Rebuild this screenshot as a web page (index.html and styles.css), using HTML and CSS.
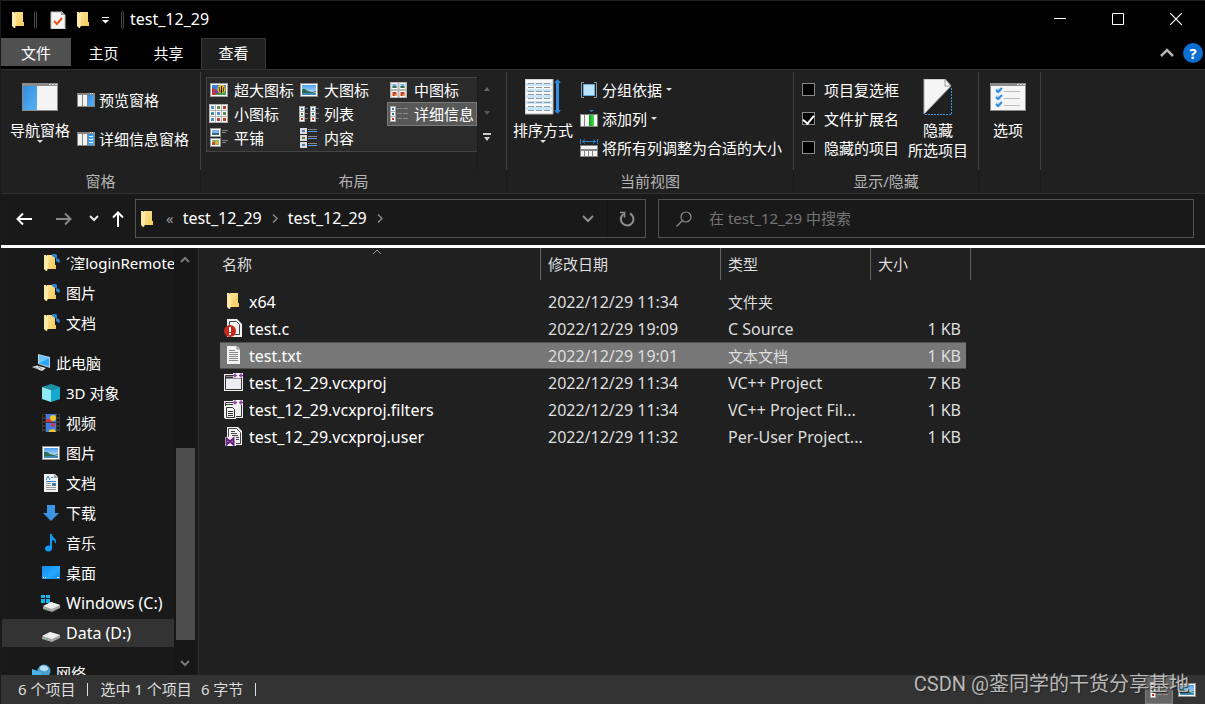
FILE: index.html
```
<!DOCTYPE html>
<html lang="zh-CN">
<head>
    <meta charset="UTF-8">
    <meta name="viewport" content="width=device-width, initial-scale=1.0">
    <title>test_12_29</title>
    <link rel="stylesheet" href="styles.css">
</head>
<body>
    <!-- Shared icons -->
    <svg class="defs" aria-hidden="true">
        <defs>
            <linearGradient id="gFolder" x1="0" y1="0" x2="1" y2="1">
                <stop offset="0" stop-color="#ffe493"/><stop offset="1" stop-color="#f4c959"/>
            </linearGradient>
            <linearGradient id="gBlue" x1="0" y1="0" x2="1" y2="1">
                <stop offset="0" stop-color="#2f8de0"/><stop offset="1" stop-color="#5cb0f2"/>
            </linearGradient>
            <linearGradient id="gSky" x1="0" y1="0" x2="0" y2="1">
                <stop offset="0" stop-color="#4a9ff0"/><stop offset="1" stop-color="#dff0fb"/>
            </linearGradient>
            <linearGradient id="gDesk" x1="0" y1="0" x2="1" y2="1">
                <stop offset="0" stop-color="#0f8cf0"/><stop offset="0.6" stop-color="#27a6ff"/><stop offset="1" stop-color="#0d8ef5"/>
            </linearGradient>
            <linearGradient id="gGreen" x1="0" y1="0" x2="1" y2="0">
                <stop offset="0" stop-color="#0fa01d"/><stop offset="1" stop-color="#3fe04a"/>
            </linearGradient>
        </defs>
        <symbol id="i-folder" viewBox="0 0 18 18">
            <path d="M5 1h8v10h1v4H5z" fill="url(#gFolder)"/>
            <path d="M2 1h2l2 2v11l-1 3H4l-2-2z" fill="#ffe9a6"/>
        </symbol>
        <symbol id="i-pinned" viewBox="0 0 18 18">
            <use href="#i-folder" width="18" height="18"/>
            <path d="M10 0l3-1 2 2v3l-2 0-3-2z" fill="#2b83cf"/>
            <path d="M14 4l3 1 1 2-1 2-3-2z" fill="#2b83cf"/>
        </symbol>
        <symbol id="i-check" viewBox="0 0 18 18">
            <path d="M2 1h11l3 3v14H2z" fill="#f4f4f4" stroke="#bdbdbd"/>
            <path d="M12 0v4h4z" fill="#9d9d9d"/>
            <path d="M5 10l3 3 5-6" fill="none" stroke="#e8541a" stroke-width="2"/>
        </symbol>
        <symbol id="i-picture" viewBox="0 0 18 14">
            <path d="M0 0h18v14H0z" fill="#8f8f8f"/>
            <path d="M1 1h16v12H1z" fill="#fff"/>
            <path d="M2 2h14v10H2z" fill="url(#gSky)"/>
            <path d="M2 6l3 0 3 2 4 1 4-1v1l-4 1H2z" fill="#2d6c58"/>
            <path d="M2 10h14v2H2z" fill="#3f87b4"/>
        </symbol>
        <symbol id="i-balloons" viewBox="0 0 18 14">
            <path d="M0 0h18v14H0z" fill="#a0a0a0"/>
            <path d="M1 1h16v12H1z" fill="#fff"/>
            <path d="M2 2h14v10H2z" fill="#3a82dc"/>
            <path d="M2 9h14v3H2z" fill="#3fa64c"/>
            <path d="M2 5l3 1 2 3-2 3H2z" fill="#c7343a"/>
            <circle cx="7" cy="9" r="2" fill="#7a3fa5"/>
            <ellipse cx="11.500" cy="6" rx="4" ry="4" fill="#f7c41c"/>
            <path d="M11 3h1v7h-1z" fill="#24160b"/>
            <path d="M9 4l1 5M14 4l-1 5" stroke="#442c0b"/>
        </symbol>
        <symbol id="i-thumb" viewBox="0 0 6 6">
            <path d="M0 0h6v6H0z" fill="#fff"/>
            <path d="M1 1h4v4H1z" fill="#6fb0e6"/>
            <path d="M1 3h4v2H1z" fill="#39764f"/>
        </symbol>
        <symbol id="i-thumb2" viewBox="0 0 6 6">
            <path d="M0 0h6v6H0z" fill="#fff"/>
            <path d="M1 1h4v4H1z" fill="#c23c22"/>
            <path d="M3 3h2v2H3z" fill="#e89b2c"/>
        </symbol>
        <symbol id="i-medium" viewBox="0 0 18 16">
            <path d="M0 0h17v16H0z" fill="#b5b5b5"/>
            <use href="#i-thumb" x="1" y="1" width="7" height="6"/>
            <use href="#i-thumb" x="9" y="1" width="7" height="6"/>
            <use href="#i-thumb2" x="1" y="9" width="7" height="6"/>
            <use href="#i-thumb2" x="9" y="9" width="7" height="6"/>
        </symbol>
        <symbol id="i-small" viewBox="0 0 19 19">
            <path d="M0 0h19v19H0z" fill="#b5b5b5"/>
            <path d="M1 1h5v5H1zM7 1h5v5H7zM13 1h5v5h-5zM1 7h5v5H1zM7 7h5v5H7zM13 7h5v5h-5zM1 13h5v5H1zM7 13h5v5H7zM13 13h5v5h-5z" fill="#fff"/>
            <path d="M2 2h3v3H2zM2 8h3v3H2zM8 8h3v3H8zM2 14h3v3H2z" fill="#4d8fc4"/>
            <path d="M8 2h3v3H8zM14 8h3v3h-3zM2 10h3v1H2z" fill="#5d8a55"/>
            <path d="M14 2h3v3h-3zM8 14h3v3H8zM14 14h3v3h-3z" fill="#c23c22"/>
        </symbol>
        <symbol id="i-strip" viewBox="0 0 6 16">
            <path d="M0 0h6v16H0z" fill="#aaa"/>
            <path d="M1 1h4v4H1zM1 6h4v4H1zM1 11h4v4H1z" fill="#fff"/>
            <path d="M2 2h2v2H2z" fill="#3479b8"/>
            <path d="M2 7h2v2H2z" fill="#3b7a3a"/>
            <path d="M2 12h2v2H2z" fill="#cf2e1d"/>
        </symbol>
        <symbol id="i-list" viewBox="0 0 20 16">
            <use href="#i-strip" x="0" width="6" height="16"/>
            <use href="#i-strip" x="11" width="6" height="16"/>
            <path d="M6 2.500h3M6 7.500h3M6 12.500h3M17 2.500h3M17 7.500h3M17 12.500h3" stroke="#777"/>
        </symbol>
        <symbol id="i-details" viewBox="0 0 18 16">
            <use href="#i-strip" width="6" height="16"/>
            <path d="M7 2.500h5M13 2.500h5M7 7.500h5M13 7.500h5M7 12.500h5M13 12.500h5" stroke="#8a8a8a"/>
        </symbol>
        <symbol id="i-tiles" viewBox="0 0 18 19">
            <path d="M0 0h11v9H0zM0 10h11v9H0z" fill="#999"/>
            <path d="M1 1h9v7H1zM1 11h9v7H1z" fill="#fff"/>
            <path d="M2 2h7v5H2z" fill="#7ab4e8"/>
            <path d="M2 5h7v2H2z" fill="#2f6f78"/>
            <path d="M2 12h7v5H2z" fill="#8fb36a"/>
            <path d="M2 14h3v3H2z" fill="#c7503a"/>
            <path d="M6 13h2v3H6z" fill="#e8b02c"/>
            <path d="M12 2.500h6M12 4.500h4M12 12.500h6M12 14.500h4" stroke="#888"/>
        </symbol>
        <symbol id="i-content" viewBox="0 0 18 20">
            <path d="M0 0h7v6H0zM0 7h7v6H0zM0 14h7v6H0z" fill="#ddd"/>
            <path d="M2 2h3v2H2zM2 16h3v2H2z" fill="#3d83c4"/>
            <path d="M2 9h3v2H2z" fill="#5a8a35"/>
            <path d="M8 1.500h9M8 8.500h9M8 15.500h9" stroke="#888"/>
            <path d="M8 3.500h9M8 10.500h9M8 17.500h9" stroke="#5b9bf0"/>
        </symbol>
        <symbol id="i-preview" viewBox="0 0 18 14">
            <path d="M0 0h18v14H0z" fill="#858585"/>
            <path d="M1 2h4v11H1zM6 2h4v11H6z" fill="#f2f2f2"/>
            <path d="M11 2h6v11h-6z" fill="url(#gBlue)"/>
            <path d="M13 0.500h1M15 0.500h1" stroke="#ddd"/>
        </symbol>
        <symbol id="i-pane" viewBox="0 0 36 28">
            <path d="M0 0h36v28H0z" fill="#8a8a8a"/>
            <path d="M1 3h14v24H1z" fill="url(#gBlue)"/>
            <path d="M15 3h20v24H15z" fill="#f4f4f4"/>
            <path d="M27 1.500h2M30 1.500h2M33 1.500h2" stroke="#e0e0e0"/>
        </symbol>
        <symbol id="i-doc" viewBox="0 0 18 18">
            <path d="M2 0h10l3 3v15H2z" fill="#f2f2f2"/>
            <path d="M12 0v3h3" fill="none" stroke="#777"/>
            <path d="M4 4.500h6M4 6.500h9M4 8.500h9M4 10.500h9M4 12.500h9M4 14.500h9" stroke="#8a8a8a"/>
        </symbol>
        <symbol id="i-plus" viewBox="0 0 10 5">
            <path d="M0 0h10v5H0z" fill="#f2f2f2"/>
            <path d="M0 2.500h4M2 .5v4M6 2.500h4M8 .5v4" stroke="#8d3fa0" stroke-width="1.500"/>
        </symbol>
    </svg>

    <div class="window">
        <header class="titlebar">
            <svg class="icon" width="18" height="18"><use href="#i-folder"/></svg>
            <span class="bar"></span>
            <svg class="icon" width="18" height="18"><use href="#i-check"/></svg>
            <svg class="icon" width="18" height="18"><use href="#i-folder"/></svg>
            <button class="quick" aria-label="自定义快速访问工具栏">
                <svg width="9" height="8" viewBox="0 0 9 8"><path d="M1 1.500h7" stroke="#fff"/><path d="M1 4h7L4.500 7.500z" fill="#fff"/></svg>
            </button>
            <span class="bar"></span>
            <h1 class="latin">test_12_29</h1>
            <div class="window-buttons">
                <button aria-label="最小化"><svg width="12" height="12" viewBox="0 0 12 12"><path d="M0 5.500h12" stroke="#fff"/></svg></button>
                <button aria-label="最大化"><svg width="12" height="12" viewBox="0 0 12 12"><path d="M0.500 0.500h11v11h-11z" fill="none" stroke="#fff"/></svg></button>
                <button aria-label="关闭"><svg width="12" height="12" viewBox="0 0 12 12"><path d="M0 0l12 12M12 0L0 12" stroke="#fff" stroke-width="1.200"/></svg></button>
            </div>
        </header>

        <nav class="tabs">
            <button class="tab file">文件</button>
            <button class="tab">主页</button>
            <button class="tab">共享</button>
            <button class="tab active">查看</button>
            <div class="tabs-right">
                <button aria-label="最小化功能区"><svg width="14" height="10" viewBox="0 0 14 10"><path d="M1 8l6-6 6 6" fill="none" stroke="#b5b5b5" stroke-width="2.500"/></svg></button>
                <button class="help" aria-label="帮助">?</button>
            </div>
        </nav>

        <section class="ribbon">
            <div class="group panes">
                <div class="group-body">
                    <button class="big">
                        <svg width="36" height="36" viewBox="0 0 36 36"><use href="#i-pane" y="4" width="36" height="28"/></svg>
                        <span>导航窗格</span>
                        <svg class="caret" width="6" height="3" viewBox="0 0 6 3"><path d="M0 0h6L3 3z"/></svg>
                    </button>
                    <div class="stack wide">
                        <button class="small"><svg width="18" height="14"><use href="#i-preview"/></svg>预览窗格</button>
                        <button class="small"><svg width="18" height="14" viewBox="0 0 18 14"><use href="#i-preview" width="18" height="14"/><path d="M12 4.500h4M12 7.500h4M12 10.500h4" stroke="#e4f2ff"/></svg>详细信息窗格</button>
                    </div>
                </div>
                <div class="group-title">窗格</div>
            </div>

            <div class="group layout">
                <div class="group-body">
                    <div class="gallery">
                        <button><svg width="20" height="20" viewBox="-1 -3 20 20"><use href="#i-balloons" width="18" height="14"/></svg>超大图标</button>
                        <button><svg width="20" height="20" viewBox="-1 -3 20 20"><use href="#i-picture" width="18" height="14"/></svg>大图标</button>
                        <button><svg width="20" height="20" viewBox="-1 -2 20 20"><use href="#i-medium" width="18" height="16"/></svg>中图标</button>
                        <button><svg width="20" height="20" viewBox="0 0 20 20"><use href="#i-small" width="19" height="19"/></svg>小图标</button>
                        <button><svg width="20" height="20" viewBox="0 -2 20 20"><use href="#i-list" width="20" height="16"/></svg>列表</button>
                        <button class="selected"><svg width="20" height="20" viewBox="-1 -2 20 20"><use href="#i-details" width="18" height="16"/></svg>详细信息</button>
                        <button><svg width="20" height="20" viewBox="-1 0 20 20"><use href="#i-tiles" width="18" height="19"/></svg>平铺</button>
                        <button><svg width="20" height="20" viewBox="-1 0 20 20"><use href="#i-content" width="18" height="20"/></svg>内容</button>
                    </div>
                    <div class="gallery-scroll">
                        <button disabled aria-label="向上"><svg width="6" height="4" viewBox="0 0 6 4"><path d="M0 4h6L3 0z" fill="#666"/></svg></button>
                        <button disabled aria-label="向下"><svg width="6" height="4" viewBox="0 0 6 4"><path d="M0 0h6L3 4z" fill="#555"/></svg></button>
                        <button aria-label="更多"><svg width="8" height="8" viewBox="0 0 8 8"><path d="M0 1h8" stroke="#ccc" stroke-width="2"/><path d="M1 4h6L4 8z" fill="#ccc"/></svg></button>
                    </div>
                </div>
                <div class="group-title">布局</div>
            </div>

            <div class="group view">
                <div class="group-body">
                    <button class="big">
                        <svg width="36" height="36" viewBox="0 0 36 36">
                            <path d="M0 0h28v35H0z" fill="#fafafa" stroke="#b5b5b5"/>
                            <path d="M1 4h26v3H1zM1 10h26v3H1zM1 16h26v3H1zM1 22h26v3H1zM1 28h26v3H1z" fill="#c9e5f7"/>
                            <path d="M3 4.500h6M11 4.500h6M19 4.500h6M3 8.500h6M11 8.500h6M19 8.500h6M3 12.500h6M11 12.500h6M19 12.500h6M3 15.500h6M11 15.500h6M19 15.500h6M3 19.500h6M11 19.500h6M19 19.500h6M3 23.500h6M11 23.500h6M19 23.500h6M3 27.500h6M11 27.500h6M19 27.500h6M3 31.500h6M11 31.500h6M19 31.500h6" stroke="#8e9aa3"/>
                            <path d="M32.500 3v29" stroke="#3690e3" stroke-width="3"/>
                            <path d="M29 4l3.500-4L36 4zM29 31l3.500 4 3.500-4z" fill="#2b84d6"/>
                        </svg>
                        <span>排序方式</span>
                        <svg class="caret" width="6" height="3" viewBox="0 0 6 3"><path d="M0 0h6L3 3z"/></svg>
                    </button>
                    <div class="stack">
                        <button class="small"><svg width="18" height="18" viewBox="0 0 18 18"><path d="M4 1.500H1.500v15H4M14 1.500h2.500v15H14" fill="none" stroke="#999"/><path d="M3.500 3.500h11v11h-11z" fill="#bfe2fb" stroke="#5fb0ee"/></svg>分组依据<svg class="caret" width="6" height="3" viewBox="0 0 6 3"><path d="M0 0h6L3 3z"/></svg></button>
                        <button class="small"><svg width="18" height="18" viewBox="0 0 18 18"><path d="M9 0h5l-2.500 2z" fill="#2b84d6"/><path d="M0 4h18v13H0z" fill="#858585"/><path d="M1 5h3v11H1zM5 5h4v11H5zM14 5h3v11h-3z" fill="#f6f6f6"/><path d="M9 5h5v11H9z" fill="url(#gGreen)"/></svg>添加列<svg class="caret" width="6" height="3" viewBox="0 0 6 3"><path d="M0 0h6L3 3z"/></svg></button>
                        <button class="small"><svg width="18" height="18" viewBox="0 0 18 18"><path d="M0.500 0v5M17.500 0v5M2 2.500h14M5 0.500L2.500 2.500 5 4.500M13 0.500l2.500 2-2.500 2" fill="none" stroke="#2f7fc4"/><path d="M0 6h18v12H0z" fill="#858585"/><path d="M1 7h16v3H1zM1 12h3v5H1zM5 12h3v5H5zM9 12h3v5H9zM13 12h4v5h-4z" fill="#f2f2f2"/></svg>将所有列调整为合适的大小</button>
                    </div>
                </div>
                <div class="group-title">当前视图</div>
            </div>

            <div class="group show">
                <div class="group-body">
                    <div class="stack">
                        <label><input type="checkbox">项目复选框</label>
                        <label><input type="checkbox" checked>文件扩展名</label>
                        <label><input type="checkbox">隐藏的项目</label>
                    </div>
                    <button class="big">
                        <svg width="36" height="36" viewBox="0 0 36 36">
                            <path d="M4 0h21l6 7L4 35z" fill="#f5f5f5" stroke="#aaa"/>
                            <path d="M25 0v7h6z" fill="#fff" stroke="#999"/>
                            <path d="M31.500 9v26.500H5" fill="none" stroke="#3a95e4" stroke-dasharray="2 1"/>
                        </svg>
                        <span>隐藏<br>所选项目</span>
                    </button>
                </div>
                <div class="group-title">显示/隐藏</div>
            </div>

            <div class="group options">
                <div class="group-body">
                    <button class="big">
                        <svg width="36" height="36" viewBox="0 0 36 36">
                            <path d="M0 4h36v28H0z" fill="#8a8a8a"/>
                            <path d="M1 7h34v24H1z" fill="#f6f6f6"/>
                            <path d="M27 5.500h2M30 5.500h2M33 5.500h2" stroke="#e0e0e0"/>
                            <path d="M6 9h5v5H6zM6 16h5v5H6zM6 23h5v5H6z" fill="#cfe4f5"/>
                            <path d="M6 11l2 2 4-4M6 18l2 2 4-4M6 25l2 2 4-4" fill="none" stroke="#2f8de0" stroke-width="2"/>
                            <path d="M14 12.500h16M14 19.500h16M14 26.500h16" stroke="#bbb"/>
                        </svg>
                        <span>选项</span>
                    </button>
                </div>
            </div>
        </section>

        <div class="address-row">
            <div class="nav-buttons">
                <button aria-label="后退"><svg width="16" height="14" viewBox="0 0 16 14"><path d="M1 7h15M7 1.500L1.500 7 7 12.500" fill="none" stroke="#fff" stroke-width="2"/></svg></button>
                <button aria-label="前进"><svg width="16" height="14" viewBox="0 0 16 14"><path d="M15 7H0M9 1.500L14.500 7 9 12.500" fill="none" stroke="#888" stroke-width="2"/></svg></button>
                <button aria-label="最近浏览的位置"><svg width="10" height="7" viewBox="0 0 10 7"><path d="M1 1l4 4 4-4" fill="none" stroke="#e6e6e6" stroke-width="2"/></svg></button>
                <button aria-label="上移"><svg width="12" height="16" viewBox="0 0 12 16"><path d="M6 1v15M1 6.500L6 1.500l5 5" fill="none" stroke="#fff" stroke-width="2"/></svg></button>
            </div>
            <div class="address">
                <svg width="18" height="18"><use href="#i-folder"/></svg>
                <span class="more">«</span>
                <a class="latin" href="#">test_12_29</a>
                <svg class="chev" width="6" height="9" viewBox="0 0 6 9"><path d="M1 0.500l4 4-4 4" fill="none" stroke="#8a8a8a" stroke-width="1.500"/></svg>
                <a class="latin" href="#">test_12_29</a>
                <svg class="chev" width="6" height="9" viewBox="0 0 6 9"><path d="M1 0.500l4 4-4 4" fill="none" stroke="#8a8a8a" stroke-width="1.500"/></svg>
                <button class="drop" aria-label="以前的位置"><svg width="12" height="8" viewBox="0 0 12 8"><path d="M1 1l5 5 5-5" fill="none" stroke="#8f8f8f" stroke-width="2"/></svg></button>
                <button class="refresh" aria-label="刷新"><svg width="16" height="16" viewBox="0 0 16 16"><path d="M11 2.500A6.300 6.300 0 1 1 4.500 3" fill="none" stroke="#8f8f8f" stroke-width="2"/><path d="M1 1.500h4.500v5" fill="none" stroke="#8f8f8f" stroke-width="1.600"/></svg></button>
            </div>
            <div class="search">
                <svg width="16" height="16" viewBox="0 0 16 16"><circle cx="10" cy="6" r="5" fill="none" stroke="#8a8a8a" stroke-width="1.200"/><path d="M6.500 9.500L0.500 15.500" stroke="#8a8a8a" stroke-width="1.200"/></svg>
                <input type="text" placeholder="在 test_12_29 中搜索" aria-label="搜索">
            </div>
        </div>

        <main class="content">
            <aside class="sidebar">
                <ul class="tree">
                    <li><svg width="20" height="18" viewBox="-1 0 20 18"><use href="#i-pinned" width="18" height="18"/></svg><span>´漥loginRemote</span></li>
                    <li><svg width="20" height="18" viewBox="-1 0 20 18"><use href="#i-pinned" width="18" height="18"/></svg><span>图片</span></li>
                    <li><svg width="20" height="18" viewBox="-1 0 20 18"><use href="#i-pinned" width="18" height="18"/></svg><span>文档</span></li>
                    <li class="root"><svg width="20" height="18" viewBox="0 0 20 18"><path d="M6 0l12 3v11L6 10z" fill="#bcd7e8"/><path d="M7 1.500l10 2.500v8.500L7 9.500z" fill="#2aa4f4"/><path d="M7 1.500l10 2.500-10 5.500z" fill="#6cc6fb"/><path d="M0 13l5-1.500 9 2.500-4 3z" fill="#dfe5e9"/><path d="M3 13l3 2M6 12.500l4 2.500" stroke="#7c868c"/></svg><span>此电脑</span></li>
                    <li><svg width="20" height="18" viewBox="0 0 20 18"><path d="M1 3l9-3 9 3-9 3z" fill="#1f8fa5"/><path d="M1 3l9 3v12l-9-3z" fill="#8eeaf2"/><path d="M10 6l9-3v12l-9 3z" fill="#16a8cf"/></svg><span>3D 对象</span></li>
                    <li><svg width="20" height="18" viewBox="0 0 20 18"><path d="M1 0h18v18H1z" fill="#3a3a3a"/><path d="M5 0h10v8H5zM5 9h10v9H5z" fill="#3f7de0"/><path d="M5 5h6v3H5z" fill="#d0324d"/><circle cx="12" cy="4" r="3" fill="#f2c524"/><circle cx="12" cy="11" r="2" fill="#d0324d"/><path d="M8 16l5-1 2 3H8z" fill="#f2c524"/><path d="M3 1v17M17 1v17" stroke="#111" stroke-width="2" stroke-dasharray="2 2"/></svg><span>视频</span></li>
                    <li><svg width="20" height="18" viewBox="0 0 20 18"><use href="#i-picture" x="1" y="2" width="18" height="14"/></svg><span>图片</span></li>
                    <li><svg width="20" height="18" viewBox="0 0 20 18"><path d="M3 0h11l3 3v15H3z" fill="#f2f2f2"/><path d="M13 0v4h4z" fill="#999"/><path d="M5 6l2-4 2 4M10 3.500h2M5 7.500h10" fill="none" stroke="#2b84d6"/><path d="M5 9.500h5M5 11.500h5M5 13.500h10M5 15.500h10" stroke="#999"/><path d="M11 9h4v3h-4z" fill="#3a7ea8"/></svg><span>文档</span></li>
                    <li><svg width="20" height="18" viewBox="0 0 20 18"><path d="M6 1h8v8h4l-8 8-8-8h4z" fill="#3a95e4"/></svg><span>下载</span></li>
                    <li><svg width="20" height="18" viewBox="0 0 20 18"><ellipse cx="7.500" cy="14.500" rx="3.500" ry="3" fill="#0f9bf5"/><path d="M9 0h2c0 4 5 4 4 9h-1c0-2-1-3-3-3v9H9z" fill="#0f9bf5"/></svg><span>音乐</span></li>
                    <li><svg width="20" height="18" viewBox="0 0 20 18"><path d="M1 2h18v13H1z" fill="url(#gDesk)"/><path d="M2 13.500h1M4 13.500h1M16 13.500h2" stroke="#fff"/></svg><span>桌面</span></li>
                    <li><svg width="20" height="18" viewBox="0 0 20 18"><path d="M2 13l8-5 9 3v3l-8 4-9-3z" fill="#a5a5a5"/><path d="M2 12l8-4 9 3-8 4z" fill="#eee"/><path d="M5 15.500l2 .5" stroke="#2bd04a"/><path d="M0 1h4v3H0zM5 1h4v3H5zM0 5h4v4H0zM5 5h4v4H5z" fill="#14b4ec"/></svg><span class="latin">Windows (C:)</span></li>
                    <li class="selected"><svg width="20" height="18" viewBox="0 0 20 18"><path d="M1 13l8-5 10 3v3l-8 4-10-3z" fill="#a5a5a5"/><path d="M1 12l8-4 10 3-8 4z" fill="#eee"/><path d="M5 15.500l2 .5" stroke="#2bd04a"/></svg><span class="latin">Data (D:)</span></li>
                    <li class="root"><svg width="20" height="18" viewBox="0 0 20 18"><circle cx="12" cy="7" r="6.500" fill="#4a9fcf"/><path d="M8 3c3-3 7-1 8 1s-3 4-5 3-4-1-3-4z" fill="#b8dff0"/><path d="M0 5l9 3v10l-9-3z" fill="#49b3ec"/></svg><span>网络</span></li>
                </ul>
                <div class="scrollbar">
                    <svg width="10" height="7" viewBox="0 0 10 7"><path d="M1 6l4-4 4 4" fill="none" stroke="#777" stroke-width="2"/></svg>
                    <div class="track"><div class="thumb"></div></div>
                    <svg width="10" height="7" viewBox="0 0 10 7"><path d="M1 1l4 4 4-4" fill="none" stroke="#777" stroke-width="2"/></svg>
                </div>
            </aside>

            <section class="files">
                <table>
                    <colgroup><col class="c-name"><col class="c-date"><col class="c-type"><col class="c-size"><col class="c-end"></colgroup>
                    <thead>
                        <tr>
                            <th class="sorted">名称<svg class="sort" width="10" height="6" viewBox="0 0 10 6"><path d="M1 5l4-4 4 4" fill="none" stroke="#999"/></svg></th>
                            <th>修改日期</th><th>类型</th><th colspan="2">大小</th>
                        </tr>
                    </thead>
                    <tbody>
                        <tr><td><div class="name"><svg width="20" height="20" viewBox="0 0 20 20"><use href="#i-folder" x="1" y="0" width="18" height="18"/></svg>x64</div></td><td>2022/12/29 11:34</td><td class="cjk">文件夹</td><td></td></tr>
                        <tr><td><div class="name"><svg width="20" height="20" viewBox="0 0 20 20"><path d="M3 0h10l5 5v13H3z" fill="#f2f2f2"/><path d="M5.500 2.500h7l3 3v10h-10z" fill="#f2f2f2" stroke="#444"/><circle cx="6" cy="12" r="6" fill="#c62a1c"/><path d="M6 8v5M6 14v2" stroke="#fff" stroke-width="2"/></svg>test.c</div></td><td>2022/12/29 19:09</td><td>C Source</td><td>1 KB</td></tr>
                        <tr class="selected"><td><div class="name"><svg width="20" height="20" viewBox="0 0 20 20"><use href="#i-doc" x="1" width="18" height="18"/></svg>test.txt</div></td><td>2022/12/29 19:01</td><td class="cjk">文本文档</td><td>1 KB</td></tr>
                        <tr><td><div class="name"><svg width="20" height="20" viewBox="0 0 20 20"><path d="M0 1h19v17H0z" fill="#f2f2f2"/><path d="M1.500 2.500h16v14h-16z" fill="#eeeef2" stroke="#333"/><path d="M1 4.500h17" stroke="#333" stroke-width="2"/><use href="#i-plus" x="9" y="0" width="10" height="5"/></svg>test_12_29.vcxproj</div></td><td>2022/12/29 11:34</td><td>VC++ Project</td><td>7 KB</td></tr>
                        <tr><td><div class="name"><svg width="20" height="20" viewBox="0 0 20 20"><path d="M0 1h19v17H0z" fill="#f2f2f2"/><path d="M1.500 2.500h16v14h-16zM1 4.500h17" fill="none" stroke="#333"/><path d="M1 6h8l3 3v10H1z" fill="#f2f2f2"/><path d="M2.500 7.500h6l2 2v8h-8zM4 11.500h5M4 13.500h5M4 15.500h5" fill="none" stroke="#333"/><use href="#i-plus" x="9" y="0" width="10" height="5"/></svg>test_12_29.vcxproj.filters</div></td><td>2022/12/29 11:34</td><td>VC++ Project Fil...</td><td>1 KB</td></tr>
                        <tr><td><div class="name"><svg width="20" height="20" viewBox="0 0 20 20"><path d="M3 0h11l4 4v14H3z" fill="#f2f2f2"/><path d="M4.500 1.500h8l4 4v11h-12zM7 4.500h4M7 6.500h6M8 8.500h6M12 10.500h3M12 12.500h3" fill="none" stroke="#444"/><path d="M1 10l10-1 1 1v9H1z" fill="#f2f2f2"/><path d="M2.500 11.500l7 6v-6l-7 6z" fill="none" stroke="#68217a" stroke-width="2"/></svg>test_12_29.vcxproj.user</div></td><td>2022/12/29 11:32</td><td>Per-User Project...</td><td>1 KB</td></tr>
                    </tbody>
                </table>
            </section>
        </main>

        <footer class="status">
            <span>6 个项目</span>
            <span class="divider"></span>
            <span>选中 1 个项目</span>
            <span class="bytes">6 字节</span>
            <span class="divider"></span>
            <div class="view-buttons">
                <button class="on" aria-label="详细信息"><svg width="18" height="16"><use href="#i-details"/></svg></button>
                <button aria-label="大图标"><svg width="18" height="14"><use href="#i-picture"/></svg></button>
            </div>
            <div class="watermark">CSDN @銮同学的干货分享基地</div>
        </footer>
    </div>
</body>
</html>
```
FILE: styles.css
```
* {
    box-sizing: border-box;
}
body {
    margin: 0;
    background: #000;
    color: #fff;
    font: 15px/20px "Noto Sans", "Noto Sans CJK SC", sans-serif;
}
button {
    display: flex;
    align-items: center;
    justify-content: center;
    margin: 0;
    padding: 0;
    border: 0;
    background: none;
    color: inherit;
    font: inherit;
    white-space: nowrap;
}
svg {
    flex: none;
    display: block;
}
a {
    color: inherit;
    text-decoration: none;
}
.defs {
    position: absolute;
    width: 0;
    height: 0;
}
.latin {
    font-size: 16px;
}
.window {
    display: flex;
    flex-direction: column;
    height: 100vh;
    min-width: 1045px;
    border-top: 1px solid #1f1f1f;
    border-left: 1px solid #1a1a1a;
    overflow: hidden;
}

/* title bar */
.titlebar {
    display: flex;
    align-items: center;
    height: 37px;
    padding-left: 9px;
}
.titlebar .bar {
    width: 3px;
    height: 18px;
    margin: 0 12px 0 6px;
    border: 1px solid #4a4a4a;
    border-radius: 2px;
}
.titlebar .icon + .icon {
    margin-left: 8px;
}
.quick {
    width: 20px;
    margin-left: 2px;
}
.quick + .bar {
    margin-right: 6px;
}
h1 {
    margin: 0;
    padding-bottom: 2px;
    font-weight: normal;
}
.window-buttons {
    display: flex;
    height: 100%;
    margin-left: auto;
}
.window-buttons button {
    width: 58px;
    padding-bottom: 2px;
}

/* tabs */
.tabs {
    display: flex;
    height: 31px;
}
.tab {
    width: 65px;
    padding-bottom: 2px;
    border: 1px solid transparent;
    border-bottom: 0;
}
.tab.file {
    width: 70px;
    height: 28px;
    padding-bottom: 0;
    background: #505050;
}
.tab.active {
    background: #202020;
    border-color: #363636;
}
.tabs-right {
    display: flex;
    align-items: center;
    gap: 9px;
    margin-left: auto;
    padding: 0 2px 2px 0;
}
.help {
    width: 20px;
    height: 20px;
    border-radius: 50%;
    background: #0a6fd0;
    font-weight: bold;
}

/* ribbon */
.ribbon {
    display: flex;
    height: 125px;
    padding-top: 2px;
    background: #202020;
    border-top: 1px solid #303030;
    border-bottom: 1px solid #303030;
}
.group {
    display: flex;
    flex-direction: column;
    border-right: 1px solid #1a1a1a;
}
.group-body {
    display: flex;
    height: 98px;
    padding-top: 5px;
    margin-right: -1px;
    border-right: 1px solid #404040;
}
.group-title {
    text-align: center;
    line-height: 22px;
    color: #b4b4b4;
}
.big {
    flex-direction: column;
    justify-content: flex-start;
    line-height: 20px;
    padding-top: 2px;
}
.big span {
    margin-top: 5px;
}
.caret {
    fill: #ddd;
}
.small {
    gap: 4px;
    height: 29px;
}
.stack {
    display: flex;
    flex-direction: column;
    align-items: flex-start;
    margin-top: -2px;
}
.stack.wide {
    margin-top: 8px;
    gap: 10px;
}
.panes .group-body {
    gap: 7px;
    padding-left: 9px;
    padding-right: 11px;
}
.layout .group-body {
    padding-left: 5px;
    padding-right: 9px;
}
.view .group-body {
    gap: 7px;
    padding-left: 6px;
    padding-right: 11px;
}
.show .group-body {
    gap: 9px;
    padding-left: 8px;
    padding-right: 10px;
}
.options .group-body {
    padding-left: 11px;
    padding-right: 14px;
}
.gallery {
    display: grid;
    grid-template-columns: repeat(3, 90px);
    grid-auto-rows: 24px;
    height: 75px;
    background: #2a2a2a;
    border: 1px solid #444;
    border-right: 0;
}
.gallery button {
    justify-content: flex-start;
    gap: 5px;
    padding-left: 2px;
}
.gallery .selected {
    background: #585858;
    border: 1px solid #7a7a7a;
    padding-left: 1px;
}
.gallery-scroll {
    border-left: 1px solid #1a1a1a;
    width: 20px;
}
.gallery-scroll button {
    width: 18px;
    height: 24px;
}
.show label {
    display: flex;
    align-items: center;
    gap: 9px;
    height: 29px;
}
input[type="checkbox"] {
    appearance: none;
    display: flex;
    justify-content: center;
    width: 13px;
    height: 13px;
    margin: 0;
    border: 1px solid #8a8a8a;
    background: #000;
}
input[type="checkbox"]:checked::after {
    content: "";
    width: 5px;
    height: 9px;
    border: solid #fff;
    border-width: 0 2px 2px 0;
    transform: rotate(40deg);
}

/* address bar */
.address-row {
    display: flex;
    gap: 12px;
    height: 51px;
    padding: 5px 11px 7px 0;
    background: #191919;
}
.nav-buttons {
    display: flex;
    align-items: center;
    gap: 13px;
    width: 122px;
    padding-left: 15px;
}
.nav-buttons button:nth-child(2) {
    margin: 0 4px 0 11px;
}
.address,
.search {
    display: flex;
    align-items: center;
    border: 1px solid #535353;
}
.address {
    flex: 506;
    padding-left: 3px;
}
.address a,
.more {
    padding-bottom: 2px;
}
.more {
    margin: 0 9px;
    color: #999;
}
.chev {
    margin: 0 10px;
}
.drop {
    width: 38px;
    margin-left: auto;
}
.refresh {
    width: 38px;
    height: 100%;
    border-left: 1px solid #141414;
}
.search {
    flex: 517;
    gap: 17px;
    padding-left: 17px;
}
.search input {
    flex: 1;
    padding: 0 0 2px;
    border: 0;
    outline: 0;
    background: none;
    color: #fff;
    font: inherit;
}
.search input::placeholder {
    color: #747474;
    opacity: 1;
}

/* content */
.content {
    display: flex;
    flex: 1;
    min-height: 0;
    background: #202020;
    border-top: 3px solid #fff;
}
.sidebar {
    display: flex;
    width: 198px;
    background: #191919;
    border-right: 1px solid #2e2e2e;
}
.tree {
    width: 173px;
    margin: 0;
    padding: 0 0 0 1px;
    list-style: none;
    overflow: hidden;
}
.tree li {
    display: flex;
    align-items: center;
    gap: 5px;
    height: 28px;
    margin: 2px 0;
    padding-left: 39px;
    white-space: nowrap;
}
.tree li:first-child {
    margin-top: 1px;
}
.tree .root {
    margin-top: 12px;
    padding-left: 30px;
    gap: 4px;
}
.tree .selected {
    background: #333;
}
.scrollbar {
    display: flex;
    flex-direction: column;
    align-items: center;
    width: 22px;
    padding: 8px 0;
    background: #171717;
}
.track {
    display: flex;
    flex-direction: column;
    justify-content: flex-end;
    flex: 1;
    width: 19px;
    padding: 0 0 20px;
}
.thumb {
    height: 51%;
    background: #4d4d4d;
}
.files {
    flex: 1;
    padding-left: 21px;
}
table {
    table-layout: fixed;
    width: 751px;
    border-collapse: separate;
    border-spacing: 0;
    font-size: 16px;
    color: #dedede;
}
.c-name { width: 321px; }
.c-date { width: 180px; }
.c-type { width: 150px; }
.c-size { width: 95px; }
.c-end { width: 5px; }
th {
    position: relative;
    height: 32px;
    padding: 0 7px;
    border-right: 1px solid #636363;
    font-size: 15px;
    font-weight: normal;
    text-align: left;
}
th:first-child {
    padding-left: 2px;
}
.sort {
    position: absolute;
    top: 1px;
    left: 50%;
    margin-left: -8px;
}
tbody::before {
    content: "";
    display: block;
    height: 8px;
}
td {
    height: 27px;
    padding: 0 7px;
    white-space: nowrap;
}
td:first-child {
    padding: 0 0 0 4px;
}
td:nth-child(4) {
    padding: 0 5px 0 0;
    text-align: right;
}
.cjk {
    font-size: 15px;
}
.name {
    display: flex;
    align-items: center;
    gap: 5px;
    color: #fff;
}
tr.selected td {
    background: #777;
    border-top: 1px solid #4f4f4f;
    border-bottom: 1px solid #4f4f4f;
}

/* status bar */
.status {
    position: relative;
    display: flex;
    align-items: center;
    height: 29px;
    padding-left: 17px;
    background: #333;
    color: #dedede;
}
.status span {
    margin-bottom: 2px;
}
.status .divider {
    width: 1px;
    height: 13px;
    margin: 0 12px;
    background: #ddd;
}
.bytes {
    margin-left: 9px;
}
.view-buttons {
    display: flex;
    height: 100%;
    margin-left: auto;
    padding-right: 4px;
}
.view-buttons button {
    width: 28px;
}
.view-buttons .on {
    background: #666;
    border: 1px solid #808080;
}
.watermark {
    position: absolute;
    right: 16px;
    bottom: 6px;
    font: 20px/28px Roboto, "Noto Sans CJK SC", sans-serif;
    color: #b8b8b8;
    text-shadow: 1px 1px 1px #222;
    white-space: nowrap;
}
```
